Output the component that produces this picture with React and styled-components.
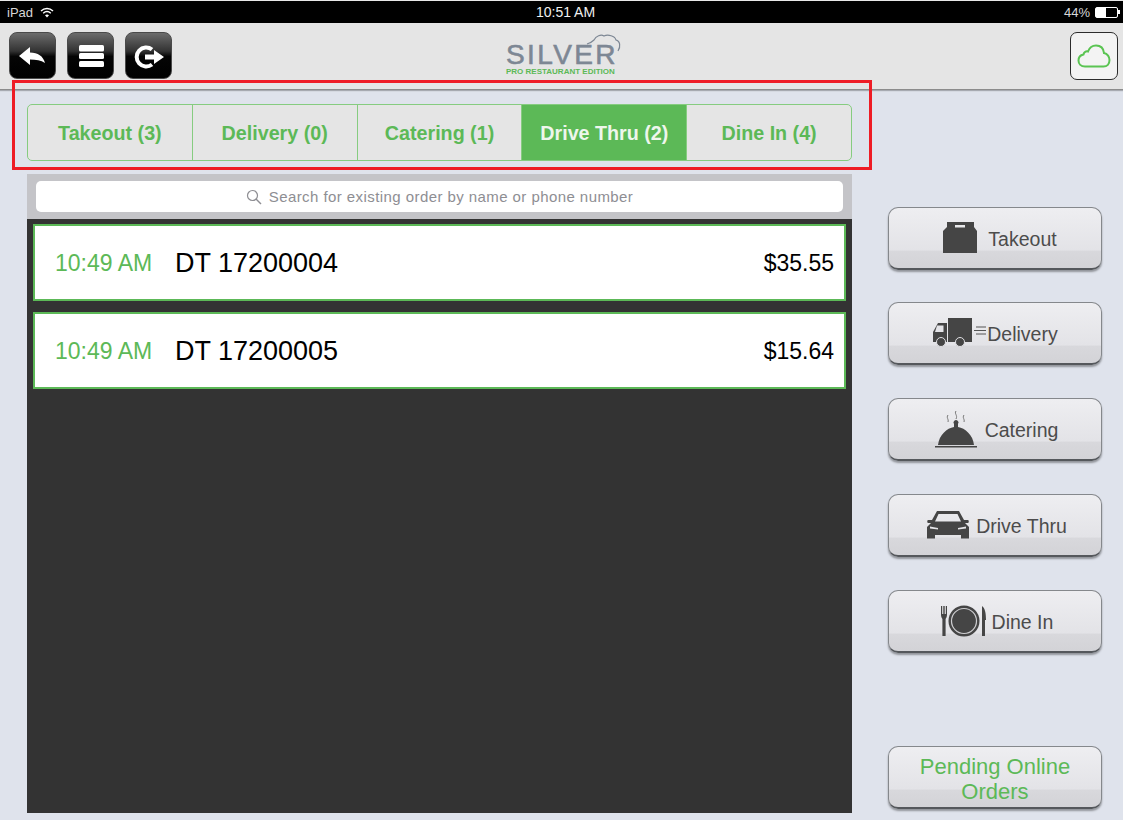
import React from 'react';
import styled, { createGlobalStyle } from 'styled-components';

const GREEN = '#5cb957';
const ICON = '#454545';

const GlobalStyle = createGlobalStyle`
    html, body {
        margin: 0;
        padding: 0;
        background: #dfe3ec;
        font-family: "Liberation Sans", Arial, sans-serif;
    }
`

const Page = styled.div`
    position: relative;
    width: 1123px;
    height: 820px;
    overflow: hidden;
    background: #dfe3ec;
`

const StatusBar = styled.div`
    height: 22px;
    border-top: 1px solid #e8e8e8;
    background: #000;
    color: #fff;
    display: grid;
    grid-template-columns: 1fr auto 1fr;
    align-items: center;
    font-size: 13px;
    padding: 0 5px 0 7px;
`

const StatusLeft = styled.div`
    display: flex;
    align-items: center;
    gap: 7px;
    color: #d8d8d8;
`

const StatusClock = styled.span`
    margin-left: 6px;
    font-size: 14px;
    color: #f0f0f0;
`

const StatusRight = styled.div`
    display: flex;
    align-items: center;
    justify-content: flex-end;
    gap: 5px;
    color: #d8d8d8;
`

const Battery = styled.div`
    position: relative;
    width: 21px;
    height: 9px;
    border: 1px solid #fff;
    border-radius: 2px;
    &::before {
        content: '';
        display: block;
        width: 10px;
        height: 9px;
        background: #fff;
    }
    &::after {
        content: '';
        position: absolute;
        right: -3px;
        top: 2px;
        width: 2px;
        height: 4px;
        background: #fff;
    }
`

const Header = styled.header`
    position: relative;
    height: 67px;
    box-sizing: border-box;
    background: #e5e5e5;
    border-bottom: 1px solid #8c8c8c;
    box-shadow: 0 1px 1px rgba(0, 0, 0, 0.25);
    display: flex;
    align-items: flex-start;
    padding: 9px 5px 0 9px;
`

const NavButtons = styled.div`
    display: flex;
    gap: 11.5px;
`

const NavButton = styled.div`
    width: 46.5px;
    height: 47px;
    box-sizing: border-box;
    border: 1px solid #4a4a4a;
    border-radius: 8px;
    background: linear-gradient(#6c6c6c 0%, #333 40%, #050505 52%, #000 100%);
    svg {
        display: block;
        margin: -1px;
    }
`

const Logo = styled.div`
    position: absolute;
    left: 506px;
    top: 10px;
    width: 116px;
    height: 46px;
`

const LogoWord = styled.div`
    position: absolute;
    left: 0;
    top: 12px;
    font-size: 28px;
    line-height: 20px;
    letter-spacing: 2.4px;
    -webkit-text-stroke: 0.6px #7d8794;
    color: #7d8794;
`

const LogoSub = styled.div`
    position: absolute;
    left: 0;
    top: 34px;
    width: 116px;
    font-size: 8px;
    line-height: 9px;
    font-weight: bold;
    white-space: nowrap;
    color: ${GREEN};
`

const LogoCloud = styled.svg`
    position: absolute;
    left: 80px;
    top: 0;
`

const CloudButton = styled.div`
    margin-left: auto;
    width: 48px;
    height: 48px;
    box-sizing: border-box;
    border: 1px solid #2c2c2c;
    border-radius: 7px;
    background: #f3f3f3;
    display: flex;
    align-items: center;
    justify-content: center;
`

const Main = styled.main`
    display: flex;
    height: 730px;
    padding-left: 27px;
`

const LeftColumn = styled.section`
    width: 825px;
    display: flex;
    flex-direction: column;
    padding-top: 14px;
    box-sizing: border-box;
`

const Segments = styled.div`
    display: flex;
    height: 57px;
    box-sizing: border-box;
    border: 1px solid #86cc80;
    border-radius: 5px;
    overflow: hidden;
    background: #e5e5e5;
`

const Segment = styled.div`
    flex: 1;
    display: flex;
    align-items: center;
    justify-content: center;
    padding-top: 2px;
    box-sizing: border-box;
    font-size: 19.7px;
    font-weight: bold;
    color: ${props => (props.$active ? '#eef6ec' : GREEN)};
    background: ${props => (props.$active ? GREEN : 'transparent')};
    & + & {
        border-left: 1px solid #86cc80;
    }
`

const SearchBar = styled.div`
    margin-top: 13px;
    height: 45px;
    box-sizing: border-box;
    background: #c4c4c8;
    padding: 7px 9px;
`

const SearchField = styled.div`
    height: 31px;
    border-radius: 5px;
    background: #fff;
    display: flex;
    align-items: center;
    justify-content: center;
    gap: 7px;
    font-size: 15px;
    letter-spacing: 0.43px;
    color: #8e8e93;
`

const OrderList = styled.div`
    height: 594px;
    box-sizing: border-box;
    background: #333;
    padding: 5px 6px;
    display: flex;
    flex-direction: column;
    gap: 11px;
`

const OrderRow = styled.div`
    height: 77px;
    box-sizing: border-box;
    border: 2px solid ${GREEN};
    background: #fff;
    display: flex;
    align-items: center;
    padding: 2px 10px 0 20px;
`

const OrderTime = styled.span`
    width: 120px;
    font-size: 23px;
    color: ${GREEN};
`

const OrderName = styled.span`
    flex: 1;
    font-size: 27px;
    color: #000;
`

const OrderTotal = styled.span`
    font-size: 23px;
    color: #000;
`

const SideColumn = styled.aside`
    margin-left: 36px;
    width: 214px;
    padding: 116.7px 0 11px;
    box-sizing: border-box;
    display: flex;
    flex-direction: column;
    gap: 32.75px;
`

const SideButton = styled.div`
    height: 63px;
    box-sizing: border-box;
    margin-top: ${props => (props.$bottom ? 'auto' : '0')};
    border: 1px solid #85888c;
    border-bottom: 2px solid #55585c;
    border-radius: 10px;
    background: linear-gradient(#eeeef1 0%, #e3e3e7 70%, #d8d8dc 72%, #d3d3d7 100%);
    box-shadow: 0 2px 2px rgba(0, 0, 0, 0.35);
    display: flex;
    align-items: center;
    justify-content: center;
    text-align: center;
    gap: ${props => props.$gap || 0}px;
    padding-left: ${props => (props.$offset === undefined ? 4 : props.$offset)}px;
    font-size: ${props => (props.$bottom ? 22 : 19.5)}px;
    line-height: 25px;
    color: ${props => (props.$bottom ? GREEN : '#4c4c4c')};
`

const SideLabel = styled.span`
    padding-top: 3px;
`

const RedFrame = styled.div`
    position: absolute;
    left: 12px;
    top: 80px;
    width: 860px;
    height: 90px;
    box-sizing: border-box;
    border: 3px solid #ee1c25;
    pointer-events: none;
`

const tabs = [
    { label: 'Takeout (3)' },
    { label: 'Delivery (0)' },
    { label: 'Catering (1)' },
    { label: 'Drive Thru (2)', active: true },
    { label: 'Dine In (4)' },
];

const orders = [
    { time: '10:49 AM', name: 'DT 17200004', total: '$35.55' },
    { time: '10:49 AM', name: 'DT 17200005', total: '$15.64' },
];

function BagIcon() {
    return (
        <svg width="34" height="31" viewBox="0 0 34 31">
            <path fill={ICON} d="M4 0H31L31 5L34 9V31H0V9L4 5Z" />
            <rect x="12" y="3" width="10" height="2.500" fill="#e8e8ea" />
        </svg>
    );
}

function TruckIcon() {
    return (
        <svg width="54" height="30" viewBox="0 0 54 30">
            <rect x="15" y="0" width="24" height="24" fill={ICON} />
            <path fill={ICON} d="M0 24V14L5 5H14V24Z" />
            <path fill="#e4e4e8" d="M4 7.500H10.500V14H2Z" />
            <circle cx="8" cy="24" r="4.500" fill={ICON} stroke="#e0e0e4" />
            <circle cx="27" cy="24" r="4.500" fill={ICON} stroke="#e0e0e4" />
            <path stroke="#555" strokeWidth="1" d="M43 9H53M41 12.500H53M43 16H53" />
        </svg>
    );
}

function ClocheIcon() {
    return (
        <svg width="44" height="38" viewBox="0 0 44 38">
            <path fill={ICON} d="M4 35C5 25 13 18 20 17V14A2.500 2.500 0 1 1 24 14V17C31 18 39 25 40 35Z" />
            <rect x="1" y="36" width="42" height="1.500" fill={ICON} />
            <path fill="none" stroke="#777" strokeWidth="1" d="M22 1C20 4 24 5 22 9M14 5C12 8 15 9 14 12M30 5C28 8 31 9 30 12" />
        </svg>
    );
}

function CarIcon() {
    return (
        <svg width="42" height="28" viewBox="0 0 42 28">
            <path
                fill={ICON}
                fillRule="evenodd"
                d="M10 0H32L37 9H41C42 9 42 12 41 12H38L42 16V27.500H34V24H8V27.500H0V16L4 12H1C0 12 0 9 1 9H5ZM11.500 3 8 10.500H34L30.500 3ZM3 15.500V17.500L11 18.500V17ZM39 15.500 31 17V18.500L39 17.500Z"
            />
        </svg>
    );
}

function PlateIcon() {
    return (
        <svg width="46" height="32" viewBox="0 0 46 32">
            <path fill={ICON} d="M0 1H1.200V9H2.300V1H3.700V9H4.800V1H6V10C6 12 5 13 4.600 14V31H1.400V14C1 13 0 12 0 10Z" />
            <circle cx="23" cy="16" r="15.500" fill={ICON} />
            <circle cx="23" cy="16" r="12.500" fill="none" stroke="#cfcfd2" strokeWidth="1.200" />
            <path fill={ICON} d="M41 31V1C44 3 45 8 45 15H44V31Z" />
        </svg>
    );
}

export default function App() {
    return (
        <Page>
            <GlobalStyle />
            <StatusBar>
                <StatusLeft>
                    <span>iPad</span>
                    <svg width="14" height="11" viewBox="0 0 14 11">
                        <path fill="none" stroke="#fff" strokeWidth="1.500" d="M1 4C4.500 .8 9.500 .8 13 4M3.200 6.200C5.500 4.200 8.500 4.200 10.800 6.200" />
                        <path fill="#fff" d="M5 8.200C6.200 7.200 7.800 7.200 9 8.200L7 10.500Z" />
                    </svg>
                </StatusLeft>
                <StatusClock>10:51 AM</StatusClock>
                <StatusRight>
                    <span>44%</span>
                    <Battery />
                </StatusRight>
            </StatusBar>
            <Header>
                <NavButtons>
                    <NavButton>
                        <svg width="46" height="47" viewBox="0 0 46 47">
                            <path fill="#fff" d="M10 24L21 15V20.500C29 20.500 34 24 36 31C32 28 27 27.500 21 27.500V33Z" />
                        </svg>
                    </NavButton>
                    <NavButton>
                        <svg width="46" height="47" viewBox="0 0 46 47">
                            <rect x="12" y="13" width="25" height="6.500" rx="1.500" fill="#fff" />
                            <rect x="12" y="21" width="25" height="6" rx="1.500" fill="#fff" />
                            <rect x="12" y="29" width="25" height="6" rx="1.500" fill="#fff" />
                        </svg>
                    </NavButton>
                    <NavButton>
                        <svg width="46" height="47" viewBox="0 0 46 47">
                            <path fill="none" stroke="#fff" strokeWidth="4" d="M27 17.500A9.500 9.500 0 1 0 27 32.500" />
                            <path fill="#fff" d="M20 22.500H29V18L39 25L29 32V27.500H20Z" />
                        </svg>
                    </NavButton>
                </NavButtons>
                <Logo>
                    <LogoCloud width="36" height="24" viewBox="0 0 36 24">
                        <path fill="none" stroke="#7d8794" strokeWidth="1.200" d="M1 11C4 10 6 9 8 7C10 3 15 1 18 3C22 1 29 3 30 7C34 8 35 13 32 18" />
                    </LogoCloud>
                    <LogoWord>SILVER</LogoWord>
                    <LogoSub>PRO RESTAURANT EDITION</LogoSub>
                </Logo>
                <CloudButton>
                    <svg width="34" height="24" viewBox="0 0 34 24">
                        <path fill="none" stroke="#5ac452" strokeWidth="2" d="M8 22.500C4 22.500 1.500 20 1.500 16.500C1.500 13 4 11 6.500 10.500C7 8 9 7 11 7.500C12.500 3.500 16 1.500 19 1.500C23.500 1.500 26.500 4.500 27 9C30.500 9.500 32.500 13 32.500 16C32.500 20 30 22.500 26.500 22.500Z" />
                    </svg>
                </CloudButton>
            </Header>
            <Main>
                <LeftColumn>
                    <Segments>
                        {tabs.map(tab => (
                            <Segment key={tab.label} $active={tab.active}>{tab.label}</Segment>
                        ))}
                    </Segments>
                    <SearchBar>
                        <SearchField>
                            <svg width="16" height="16" viewBox="0 0 16 16">
                                <circle cx="6.500" cy="6.500" r="5" fill="none" stroke="#8e8e93" strokeWidth="1.200" />
                                <path stroke="#8e8e93" strokeWidth="1.400" d="M10 10L15 15" />
                            </svg>
                            <span>Search for existing order by name or phone number</span>
                        </SearchField>
                    </SearchBar>
                    <OrderList>
                        {orders.map(order => (
                            <OrderRow key={order.name}>
                                <OrderTime>{order.time}</OrderTime>
                                <OrderName>{order.name}</OrderName>
                                <OrderTotal>{order.total}</OrderTotal>
                            </OrderRow>
                        ))}
                    </OrderList>
                </LeftColumn>
                <SideColumn>
                    <SideButton $gap={11} $offset={10}><BagIcon /><SideLabel>Takeout</SideLabel></SideButton>
                    <SideButton $offset={1}><TruckIcon /><SideLabel>Delivery</SideLabel></SideButton>
                    <SideButton $gap={7} $offset={2}><ClocheIcon /><SideLabel>Catering</SideLabel></SideButton>
                    <SideButton $gap={7}><CarIcon /><SideLabel>Drive Thru</SideLabel></SideButton>
                    <SideButton $gap={5}><PlateIcon /><SideLabel>Dine In</SideLabel></SideButton>
                    <SideButton $bottom $offset={0}><SideLabel>Pending Online<br />Orders</SideLabel></SideButton>
                </SideColumn>
            </Main>
            <RedFrame />
        </Page>
    );
}
